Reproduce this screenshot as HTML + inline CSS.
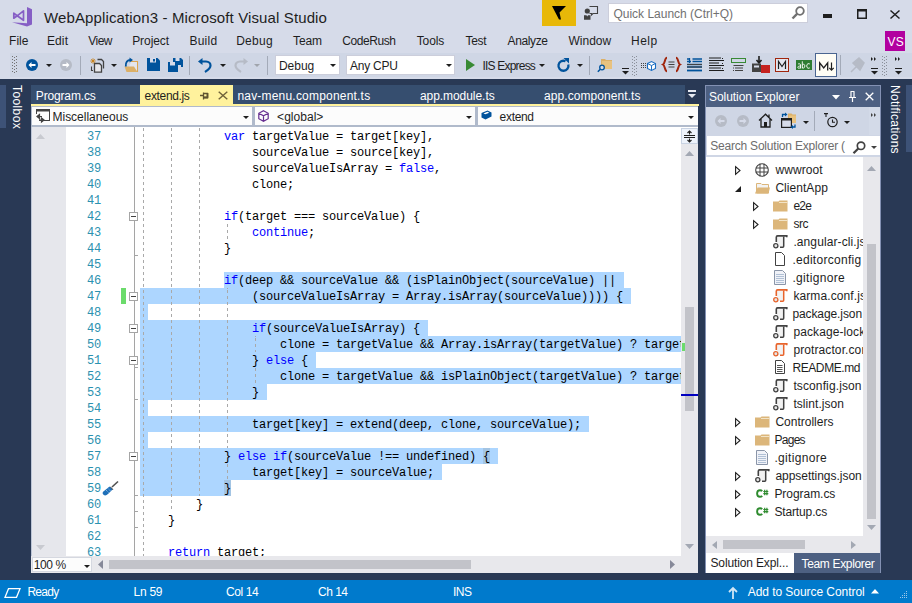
<!DOCTYPE html>
<html><head><meta charset="utf-8">
<style>
*{margin:0;padding:0;box-sizing:border-box}
html,body{width:912px;height:603px;overflow:hidden}
body{position:relative;background:#293955;font-family:"Liberation Sans",sans-serif;font-size:12px;color:#1E1E1E}
.a{position:absolute}
.t{position:absolute;white-space:pre;line-height:14px}
svg{position:absolute;overflow:visible}
#top{left:0;top:0;width:912px;height:79px;background:#D6DBE9}
#tb{left:10px;top:53px;width:902px;height:24px;background:#CFD6E5}
#status{left:0;top:580px;width:912px;height:23px;background:#007ACC}
#tabs{left:31px;top:85px;width:654px;height:19px;background:#364E6F}
#atab{left:140px;top:85px;width:93px;height:19px;background:#FFF29D}
#yline{left:31px;top:104px;width:668px;height:2px;background:#FFF29D}
#nav{left:31px;top:106px;width:667px;height:21px;background:#B0BACB}
.combo{position:absolute;top:107px;height:18px;background:#FCFCFC}
#editor{left:31px;top:127px;width:667px;height:446px;background:#fff;overflow:hidden}
#gut{left:32px;top:127px;width:34px;height:429px;background:#E6E7EC}
.code{position:absolute;font-family:"Liberation Mono",monospace;font-size:12px;letter-spacing:-0.2px;line-height:16px;white-space:pre}
.ln{left:34px;width:36px;text-align:right;color:#2B91AF}
.cl{left:140px;color:#000}
.k{color:#0000FF}
.sel{position:absolute;background:#ADD6FF}
#se{left:705px;top:85px;width:176px;height:488px;background:#fff;border:1px solid #8391B3}
#setitle{left:706px;top:86px;width:174px;height:21px;background:#4D6082}
#setb{left:706px;top:107px;width:174px;height:28px;background:#CFD6E5}
#sesearch{left:706px;top:135px;width:174px;height:22px;background:#CFD6E5}
</style></head><body>
<div id="top" class="a"></div>
<div id="tb" class="a"></div>
<div id="status" class="a"></div>
<div id="tabs" class="a"></div>
<div id="atab" class="a"></div>
<div id="yline" class="a"></div>
<div id="nav" class="a"></div>
<div class="combo" style="left:32px;width:220px"></div>
<div class="combo" style="left:255px;width:220px"></div>
<div class="combo" style="left:478px;width:220px"></div>
<svg style="left:12px;top:7px;" width="21" height="21" viewBox="0 0 21 21"><path d="M15 0L20 2.3V17.5L15 19.5Z" fill="#865FC5"/><path d="M0 15.2L15 16.3V19.5Z" fill="#865FC5"/><path d="M1.8 6.2L5.2 8.8L1.8 11.2Z M11.5 3.8V13.3L5.2 8.8Z" fill="none" stroke="#865FC5" stroke-width="1.7" stroke-linejoin="round"/></svg>
<div class="t" style="left:44.00px;top:10px;font-size:15px;line-height:1;color:#1E1E1E;;letter-spacing:0.125px">WebApplication3 - Microsoft Visual Studio</div>
<div class="a" style="left:542px;top:0px;width:34px;height:26px;background:#E8B808;"></div>
<svg style="left:551px;top:6px;" width="16" height="15" viewBox="0 0 16 15"><path d="M1 0H15L8.5 6.5L10 13.5H8Z" fill="#000"/></svg>
<svg style="left:583px;top:5px;" width="17" height="16" viewBox="0 0 17 16"><path d="M6.5 1.5H14.5V8.5H10L8.5 10V8.5H6.5" fill="none" stroke="#424242" stroke-width="1.1"/><circle cx="4.3" cy="6" r="2.6" fill="#424242"/><path d="M1 14.8V10.3H3.5L4.3 11.5L5 10.3H7.5V14.8Z" fill="#424242"/></svg>
<div class="a" style="left:608px;top:3px;width:200px;height:20px;background:#fff;border:1px solid #CCCEDB"></div>
<div class="t" style="left:613.40px;top:8px;font-size:12px;line-height:1;color:#717171;;letter-spacing:0.000px">Quick Launch (Ctrl+Q)</div>
<svg style="left:791px;top:6px;" width="14" height="14" viewBox="0 0 14 14"><circle cx="9" cy="5" r="3.8" fill="none" stroke="#717171" stroke-width="1.8"/><path d="M6.3 7.7 L1.5 12.5" stroke="#717171" stroke-width="2.4"/></svg>
<div class="a" style="left:823px;top:14px;width:9px;height:4px;background:#1E1E1E;"></div>
<svg style="left:857px;top:9px;" width="10" height="10" viewBox="0 0 10 10"><rect x="0.75" y="0.75" width="8.5" height="8.5" fill="none" stroke="#1E1E1E" stroke-width="1.5"/><rect x="0" y="0" width="10" height="2.5" fill="#1E1E1E"/></svg>
<svg style="left:890px;top:10px;" width="10" height="9" viewBox="0 0 10 9"><path d="M0.5 0.5 L9.5 8.5 M9.5 0.5 L0.5 8.5" stroke="#1E1E1E" stroke-width="1.5"/></svg>
<div class="t" style="left:9.10px;top:35px;font-size:12px;line-height:1;color:#1E1E1E;;letter-spacing:0.000px">File</div>
<div class="t" style="left:46.90px;top:35px;font-size:12px;line-height:1;color:#1E1E1E;;letter-spacing:0.133px">Edit</div>
<div class="t" style="left:88.30px;top:35px;font-size:12px;line-height:1;color:#1E1E1E;;letter-spacing:-0.533px">View</div>
<div class="t" style="left:132.20px;top:35px;font-size:12px;line-height:1;color:#1E1E1E;;letter-spacing:-0.067px">Project</div>
<div class="t" style="left:189.40px;top:35px;font-size:12px;line-height:1;color:#1E1E1E;;letter-spacing:0.250px">Build</div>
<div class="t" style="left:236.20px;top:35px;font-size:12px;line-height:1;color:#1E1E1E;;letter-spacing:0.250px">Debug</div>
<div class="t" style="left:293.10px;top:35px;font-size:12px;line-height:1;color:#1E1E1E;;letter-spacing:-0.133px">Team</div>
<div class="t" style="left:342.30px;top:35px;font-size:12px;line-height:1;color:#1E1E1E;;letter-spacing:-0.429px">CodeRush</div>
<div class="t" style="left:416.70px;top:35px;font-size:12px;line-height:1;color:#1E1E1E;;letter-spacing:-0.100px">Tools</div>
<div class="t" style="left:465.60px;top:35px;font-size:12px;line-height:1;color:#1E1E1E;;letter-spacing:-0.333px">Test</div>
<div class="t" style="left:507.50px;top:35px;font-size:12px;line-height:1;color:#1E1E1E;;letter-spacing:-0.367px">Analyze</div>
<div class="t" style="left:568.50px;top:35px;font-size:12px;line-height:1;color:#1E1E1E;;letter-spacing:0.000px">Window</div>
<div class="t" style="left:631.10px;top:35px;font-size:12px;line-height:1;color:#1E1E1E;;letter-spacing:0.467px">Help</div>
<div class="a" style="left:885px;top:31px;width:20px;height:20px;background:#B2009F;"></div>
<div class="t" style="left:887.5px;top:36px;font-size:12px;line-height:1;color:#fff;letter-spacing:0.3px">VS</div>
<div class="a" style="left:12px;top:56px;width:1px;height:1px;background:#717171;"></div>
<div class="a" style="left:16px;top:56px;width:1px;height:1px;background:#717171;"></div>
<div class="a" style="left:14px;top:57px;width:1px;height:1px;background:#717171;"></div>
<div class="a" style="left:12px;top:59px;width:1px;height:1px;background:#717171;"></div>
<div class="a" style="left:16px;top:59px;width:1px;height:1px;background:#717171;"></div>
<div class="a" style="left:14px;top:60px;width:1px;height:1px;background:#717171;"></div>
<div class="a" style="left:12px;top:62px;width:1px;height:1px;background:#717171;"></div>
<div class="a" style="left:16px;top:62px;width:1px;height:1px;background:#717171;"></div>
<div class="a" style="left:14px;top:63px;width:1px;height:1px;background:#717171;"></div>
<div class="a" style="left:12px;top:65px;width:1px;height:1px;background:#717171;"></div>
<div class="a" style="left:16px;top:65px;width:1px;height:1px;background:#717171;"></div>
<div class="a" style="left:14px;top:66px;width:1px;height:1px;background:#717171;"></div>
<div class="a" style="left:12px;top:68px;width:1px;height:1px;background:#717171;"></div>
<div class="a" style="left:16px;top:68px;width:1px;height:1px;background:#717171;"></div>
<div class="a" style="left:14px;top:69px;width:1px;height:1px;background:#717171;"></div>
<div class="a" style="left:12px;top:71px;width:1px;height:1px;background:#717171;"></div>
<div class="a" style="left:16px;top:71px;width:1px;height:1px;background:#717171;"></div>
<div class="a" style="left:14px;top:72px;width:1px;height:1px;background:#717171;"></div>
<svg style="left:26px;top:59px;" width="12" height="12" viewBox="0 0 12 12"><circle cx="6" cy="6" r="6" fill="#00539C"/><path d="M2.5 6 L5.5 3 V5 H9.5 V7 H5.5 V9Z" fill="#fff"/></svg>
<svg style="left:46px;top:64px;" width="6" height="4" viewBox="0 0 6 4"><path d="M0 0h6l-3 3z" fill="#1E1E1E"/></svg>
<svg style="left:60px;top:59px;" width="12" height="12" viewBox="0 0 12 12"><circle cx="6" cy="6" r="6" fill="#B6BBC6"/><path d="M9.5 6 L6.5 3 V5 H2.5 V7 H6.5 V9Z" fill="#fff"/></svg>
<div class="a" style="left:80px;top:56px;width:1px;height:19px;background:#A3AAB8;"></div>
<svg style="left:90px;top:58px;" width="14" height="15" viewBox="0 0 14 15"><path d="M7.5 1.5H11.5L13.5 3.5V10.5" fill="none" stroke="#424242" stroke-width="1.3"/><path d="M4.5 5.5H9.5L11.5 7.5V14.2H4.5Z" fill="#E8E8EC" stroke="#424242" stroke-width="1.3"/><path d="M1.5 8.5V12.5H3" fill="none" stroke="#424242" stroke-width="1.1"/><path d="M3 0.3V5.7M0.3 3H5.7M1.2 1.2L4.8 4.8M4.8 1.2L1.2 4.8" stroke="#C8811A" stroke-width="0.9"/></svg>
<svg style="left:111px;top:64px;" width="6" height="4" viewBox="0 0 6 4"><path d="M0 0h6l-3 3z" fill="#1E1E1E"/></svg>
<svg style="left:124px;top:58px;" width="15" height="15" viewBox="0 0 15 15"><path d="M7 3.5H13.5V14" fill="none" stroke="#DCA54F" stroke-width="1.1"/><path d="M7 4H13V14H3Z" fill="#E4E6EE"/><path d="M0.5 8.5H10L13.5 14H2.5Z" fill="#DCB067"/><path d="M1.8 8.5C1.3 4 3.5 2 6.5 2" fill="none" stroke="#00539C" stroke-width="1.8"/><path d="M5.5 -0.5L9 2L5.5 4.5Z" fill="#00539C"/></svg>
<svg style="left:147px;top:58px;" width="13" height="13" viewBox="0 0 13 13"><path d="M0 0H10.5L13 2.5V13H0Z" fill="#00539C"/><rect x="3" y="0" width="6" height="4.5" fill="#D6DBE9"/><rect x="6" y="1" width="2" height="2.5" fill="#00539C"/><rect x="2.5" y="8" width="8" height="5" fill="#00539C"/></svg>
<svg style="left:168px;top:58px;" width="15" height="14" viewBox="0 0 15 14"><path d="M5 0H13L15 2V9H13V7H5Z" fill="#00539C"/><rect x="7.5" y="0" width="4" height="3" fill="#D6DBE9"/><path d="M0 4H8L10 6V14H0Z" fill="#00539C"/><rect x="2" y="4" width="5" height="3.5" fill="#D6DBE9"/><rect x="2" y="10" width="6" height="4" fill="#00539C"/></svg>
<div class="a" style="left:189px;top:56px;width:1px;height:19px;background:#A3AAB8;"></div>
<svg style="left:198px;top:58px;" width="14" height="15" viewBox="0 0 14 15"><path d="M3 3.5 H8 C11 3.5 12.5 5.5 12.5 7.5 C12.5 10.5 10 12 7 14" fill="none" stroke="#00539C" stroke-width="2.2"/><path d="M0 3.5 L4.5 0 V7Z" fill="#00539C"/></svg>
<svg style="left:220px;top:64px;" width="6" height="4" viewBox="0 0 6 4"><path d="M0 0h6l-3 3z" fill="#1E1E1E"/></svg>
<svg style="left:234px;top:58px;" width="14" height="15" viewBox="0 0 14 15"><path d="M11 3.5 H6 C3 3.5 1.5 5.5 1.5 7.5 C1.5 10.5 4 12 7 14" fill="none" stroke="#B6BBC6" stroke-width="2.2"/><path d="M14 3.5 L9.5 0 V7Z" fill="#B6BBC6"/></svg>
<svg style="left:254px;top:64px;" width="6" height="4" viewBox="0 0 6 4"><path d="M0 0h6l-3 3z" fill="#A0A4AC"/></svg>
<div class="a" style="left:267px;top:56px;width:1px;height:19px;background:#A3AAB8;"></div>
<div class="a" style="left:275px;top:55px;width:65px;height:20px;background:#fff;border:1px solid #CCCEDB"></div>
<div class="t" style="left:278.90px;top:60px;font-size:12px;line-height:1;color:#1E1E1E;;letter-spacing:0.000px">Debug</div>
<svg style="left:330px;top:64px;" width="6" height="4" viewBox="0 0 6 4"><path d="M0 0h6l-3 3z" fill="#1E1E1E"/></svg>
<div class="a" style="left:346px;top:55px;width:109px;height:20px;background:#fff;border:1px solid #CCCEDB"></div>
<div class="t" style="left:350.00px;top:60px;font-size:12px;line-height:1;color:#1E1E1E;;letter-spacing:-0.233px">Any CPU</div>
<svg style="left:446px;top:64px;" width="6" height="4" viewBox="0 0 6 4"><path d="M0 0h6l-3 3z" fill="#1E1E1E"/></svg>
<svg style="left:466px;top:59px;" width="9" height="12" viewBox="0 0 9 12"><path d="M0 0 L9 6 L0 12Z" fill="#388A34"/></svg>
<div class="t" style="left:482.50px;top:60px;font-size:12px;line-height:1;color:#1E1E1E;;letter-spacing:-0.800px">IIS Express</div>
<svg style="left:539px;top:64px;" width="6" height="4" viewBox="0 0 6 4"><path d="M0 0h6l-3 3z" fill="#1E1E1E"/></svg>
<svg style="left:557px;top:58px;" width="13" height="14" viewBox="0 0 13 14"><path d="M8.5 3.2 A5 5 0 1 0 11.3 6.5" fill="none" stroke="#00539C" stroke-width="2.3"/><path d="M6.5 0 H12 V5.5Z" fill="#00539C"/></svg>
<svg style="left:577px;top:64px;" width="6" height="4" viewBox="0 0 6 4"><path d="M0 0h6l-3 3z" fill="#1E1E1E"/></svg>
<div class="a" style="left:589px;top:56px;width:1px;height:19px;background:#A3AAB8;"></div>
<svg style="left:597px;top:57px;" width="16" height="16" viewBox="0 0 16 16"><path d="M4 2H8L9 3H15V12H4Z" fill="#DCB067"/><path d="M5 4H15V12H5Z" fill="#E8C27F"/><circle cx="5" cy="10.5" r="2.3" fill="#D6DBE9" stroke="#00539C" stroke-width="1.3"/><path d="M3.3 12.3 L0.8 14.8" stroke="#00539C" stroke-width="1.6"/></svg>
<div class="a" style="left:622px;top:68px;width:7px;height:1px;background:#1E1E1E;"></div>
<svg style="left:622px;top:71px;" width="7" height="4" viewBox="0 0 7 4"><path d="M0 0h7l-3.5 3.5z" fill="#1E1E1E"/></svg>
<div class="a" style="left:632px;top:56px;width:1px;height:1px;background:#8A8F99;"></div>
<div class="a" style="left:636px;top:56px;width:1px;height:1px;background:#8A8F99;"></div>
<div class="a" style="left:634px;top:57px;width:1px;height:1px;background:#8A8F99;"></div>
<div class="a" style="left:632px;top:59px;width:1px;height:1px;background:#8A8F99;"></div>
<div class="a" style="left:636px;top:59px;width:1px;height:1px;background:#8A8F99;"></div>
<div class="a" style="left:634px;top:60px;width:1px;height:1px;background:#8A8F99;"></div>
<div class="a" style="left:632px;top:62px;width:1px;height:1px;background:#8A8F99;"></div>
<div class="a" style="left:636px;top:62px;width:1px;height:1px;background:#8A8F99;"></div>
<div class="a" style="left:634px;top:63px;width:1px;height:1px;background:#8A8F99;"></div>
<div class="a" style="left:632px;top:65px;width:1px;height:1px;background:#8A8F99;"></div>
<div class="a" style="left:636px;top:65px;width:1px;height:1px;background:#8A8F99;"></div>
<div class="a" style="left:634px;top:66px;width:1px;height:1px;background:#8A8F99;"></div>
<div class="a" style="left:632px;top:68px;width:1px;height:1px;background:#8A8F99;"></div>
<div class="a" style="left:636px;top:68px;width:1px;height:1px;background:#8A8F99;"></div>
<div class="a" style="left:634px;top:69px;width:1px;height:1px;background:#8A8F99;"></div>
<div class="a" style="left:632px;top:71px;width:1px;height:1px;background:#8A8F99;"></div>
<div class="a" style="left:636px;top:71px;width:1px;height:1px;background:#8A8F99;"></div>
<div class="a" style="left:634px;top:72px;width:1px;height:1px;background:#8A8F99;"></div>
<div class="a" style="left:632px;top:74px;width:1px;height:1px;background:#8A8F99;"></div>
<div class="a" style="left:636px;top:74px;width:1px;height:1px;background:#8A8F99;"></div>
<div class="a" style="left:634px;top:75px;width:1px;height:1px;background:#8A8F99;"></div>
<svg style="left:641px;top:61px;" width="16" height="10" viewBox="0 0 16 10"><g fill="#424242"><rect x="0" y="2" width="1" height="1"/><rect x="2" y="2" width="1" height="1"/><rect x="4" y="2" width="1" height="1"/><rect x="0" y="4" width="1" height="1"/><rect x="2" y="4" width="1" height="1"/><rect x="4" y="4" width="1" height="1"/><rect x="0" y="6" width="1" height="1"/><rect x="2" y="6" width="1" height="1"/><rect x="4" y="6" width="1" height="1"/></g><path d="M6.5 2.5 L10.5 0.5 L14.5 2.5 V7.5 L10.5 9.5 L6.5 7.5Z" fill="#fff" stroke="#1B6EC2" stroke-width="1.1"/><path d="M6.5 2.5 L10.5 4.5 L14.5 2.5 M10.5 4.5 V9.5" fill="none" stroke="#1B6EC2" stroke-width="1"/></svg>
<svg style="left:662px;top:57px;" width="19" height="15" viewBox="0 0 19 15"><path d="M5 0.8 C2.5 0.8 3.3 6.2 1 7.5 C3.3 8.8 2.5 14.2 5 14.2 M14 0.8 C16.5 0.8 15.7 6.2 18 7.5 C15.7 8.8 16.5 14.2 14 14.2" fill="none" stroke="#A1260D" stroke-width="2"/><path d="M6.5 5h6M6.5 7.5h6M6.5 10h6" stroke="#424242" stroke-width="1.2"/></svg>
<svg style="left:687px;top:58px;" width="15" height="14" viewBox="0 0 15 14"><path d="M0 1h2M0 3.5h4M2.5 0v5M5.5 1h9.5M5.5 3.5h9.5M0 6.5h15M0 9h15M0 12.5h15" stroke="#00539C" stroke-width="1.3"/><path d="M0 6.5h15M0 9h15" stroke="#424242" stroke-width="1.2"/><path d="M0 12.5h15" stroke="#00539C" stroke-width="1.4"/></svg>
<svg style="left:709px;top:57px;" width="15" height="15" viewBox="0 0 15 15"><path d="M0 1h12M0 3.5h15M0 6h10M0 8.5h15M0 11h12M0 13.5h15" stroke="#1E1E1E" stroke-width="1.2"/><path d="M13.5 1v1M13.5 6v1M13.5 11v1" stroke="#1E1E1E"/></svg>
<svg style="left:731px;top:58px;" width="15" height="14" viewBox="0 0 15 14"><rect x="0.5" y="0.5" width="14" height="4" fill="none" stroke="#388A34"/><path d="M2.5 7.5h10M4 10h8M4 12.5h8" stroke="#424242" stroke-width="1.1"/><path d="M2 10h1M2 12.5h1" stroke="#424242"/></svg>
<svg style="left:752px;top:56px;" width="19" height="17" viewBox="0 0 19 17"><path d="M7 0v6M4.5 4L7 7L9.5 4" fill="none" stroke="#1E1E1E" stroke-width="1.6"/><path d="M0 7.5H9V16H0Z" fill="#424242"/><rect x="2" y="9.5" width="5" height="2" fill="#D6DBE9"/><rect x="9" y="9" width="9" height="8" fill="#C5221F"/></svg>
<svg style="left:775px;top:58px;" width="14" height="14" viewBox="0 0 14 14"><rect x="0.5" y="0.5" width="13" height="13" fill="#E4E7F0" stroke="#A1260D" stroke-width="1"/><path d="M3.5 11V3.5L7 8.5L10.5 3.5V11" fill="none" stroke="#1E1E1E" stroke-width="1.2"/></svg>
<div class="a" style="left:796px;top:60px;width:16px;height:10px;background:#2E7D32;"></div>
<svg style="left:797px;top:61px;" width="14" height="8" viewBox="0 0 14 8"><path d="M1 3.2C1.5 2.5 3.5 2.5 3.5 3.8V7.5M3.5 5C1.5 5 0.8 5.6 0.8 6.4C0.8 7.6 2.8 7.5 3.5 6.3M5.3 0.3V7.5M5.3 4.5C5.3 3 7.8 2.6 7.8 5C7.8 7.6 5.3 7.6 5.3 5.8M12.8 3C12 2.3 9.7 2.4 9.7 5C9.7 7.5 12 7.7 12.8 6.8" fill="none" stroke="#fff" stroke-width="0.9"/></svg>
<div class="a" style="left:815px;top:53px;width:22px;height:24px;background:#FFFDF5;border:1px solid #4A6591"></div>
<svg style="left:819px;top:62px;" width="15" height="9" viewBox="0 0 15 9"><path d="M0.7 8.5V0.8L4.7 6L8.7 0.8V8.5" fill="none" stroke="#1E1E1E" stroke-width="1.3"/><path d="M12.5 0.5V8M10.3 5.8L12.5 8.2L14.7 5.8" fill="none" stroke="#1E1E1E" stroke-width="1.2"/></svg>
<div class="a" style="left:840px;top:55px;width:1px;height:20px;background:#A3AAB8;"></div>
<svg style="left:850px;top:58px;" width="15" height="15" viewBox="0 0 15 15"><path d="M1 14 L7 8 M6 3 L12 9 M9 0 L14 5 L10 12 L3 5Z" fill="#B6BBC6" stroke="#B6BBC6" stroke-width="1.5"/></svg>
<svg style="left:871px;top:57px;" width="6" height="5" viewBox="0 0 6 5"><path d="M0 0L2 2L0 4ZM3 0L5 2L3 4Z" fill="#1E1E1E"/></svg>
<div class="a" style="left:871px;top:68px;width:7px;height:1px;background:#1E1E1E;"></div>
<svg style="left:871px;top:71px;" width="7" height="4" viewBox="0 0 7 4"><path d="M0 0h7l-3.5 3.5z" fill="#1E1E1E"/></svg>
<svg style="left:895px;top:57px;" width="6" height="5" viewBox="0 0 6 5"><path d="M0 0L2 2L0 4ZM3 0L5 2L3 4Z" fill="#1E1E1E"/></svg>
<div class="a" style="left:895px;top:68px;width:7px;height:1px;background:#1E1E1E;"></div>
<svg style="left:895px;top:71px;" width="7" height="4" viewBox="0 0 7 4"><path d="M0 0h7l-3.5 3.5z" fill="#1E1E1E"/></svg>
<div class="a" style="left:882px;top:56px;width:1px;height:1px;background:#8A8F99;"></div>
<div class="a" style="left:886px;top:56px;width:1px;height:1px;background:#8A8F99;"></div>
<div class="a" style="left:884px;top:57px;width:1px;height:1px;background:#8A8F99;"></div>
<div class="a" style="left:882px;top:59px;width:1px;height:1px;background:#8A8F99;"></div>
<div class="a" style="left:886px;top:59px;width:1px;height:1px;background:#8A8F99;"></div>
<div class="a" style="left:884px;top:60px;width:1px;height:1px;background:#8A8F99;"></div>
<div class="a" style="left:882px;top:62px;width:1px;height:1px;background:#8A8F99;"></div>
<div class="a" style="left:886px;top:62px;width:1px;height:1px;background:#8A8F99;"></div>
<div class="a" style="left:884px;top:63px;width:1px;height:1px;background:#8A8F99;"></div>
<div class="a" style="left:882px;top:65px;width:1px;height:1px;background:#8A8F99;"></div>
<div class="a" style="left:886px;top:65px;width:1px;height:1px;background:#8A8F99;"></div>
<div class="a" style="left:884px;top:66px;width:1px;height:1px;background:#8A8F99;"></div>
<div class="a" style="left:882px;top:68px;width:1px;height:1px;background:#8A8F99;"></div>
<div class="a" style="left:886px;top:68px;width:1px;height:1px;background:#8A8F99;"></div>
<div class="a" style="left:884px;top:69px;width:1px;height:1px;background:#8A8F99;"></div>
<div class="a" style="left:882px;top:71px;width:1px;height:1px;background:#8A8F99;"></div>
<div class="a" style="left:886px;top:71px;width:1px;height:1px;background:#8A8F99;"></div>
<div class="a" style="left:884px;top:72px;width:1px;height:1px;background:#8A8F99;"></div>
<div class="a" style="left:882px;top:74px;width:1px;height:1px;background:#8A8F99;"></div>
<div class="a" style="left:886px;top:74px;width:1px;height:1px;background:#8A8F99;"></div>
<div class="a" style="left:884px;top:75px;width:1px;height:1px;background:#8A8F99;"></div>
<div class="t" style="left:35.80px;top:90px;font-size:12px;line-height:1;color:#FFFFFF;;letter-spacing:-0.156px">Program.cs</div>
<div class="t" style="left:144.60px;top:90px;font-size:12px;line-height:1;color:#1E1E1E;;letter-spacing:-0.350px">extend.js</div>
<svg style="left:200px;top:92px;" width="9" height="8" viewBox="0 0 9 8"><path d="M0 3.5H3.5M3.5 0.5V7.5M3.5 1.5H8M3.5 5.5H8M7.5 1.5V5.5" fill="none" stroke="#5F5330" stroke-width="1.3"/><path d="M7.5 1V6.3M3.5 5.5H8" stroke="#5F5330" stroke-width="1.8"/></svg>
<svg style="left:218px;top:91px;" width="10" height="9" viewBox="0 0 10 9"><path d="M0.7 0.7L9.3 8.3M9.3 0.7L0.7 8.3" stroke="#6F623A" stroke-width="1.4"/></svg>
<div class="t" style="left:237.40px;top:90px;font-size:12px;line-height:1;color:#FFFFFF;;letter-spacing:0.200px">nav-menu.component.ts</div>
<div class="t" style="left:419.90px;top:90px;font-size:12px;line-height:1;color:#FFFFFF;;letter-spacing:-0.050px">app.module.ts</div>
<div class="t" style="left:544.10px;top:90px;font-size:12px;line-height:1;color:#FFFFFF;;letter-spacing:0.067px">app.component.ts</div>
<div class="a" style="left:688px;top:90px;width:8px;height:2px;background:#E6E9F0;"></div>
<svg style="left:688px;top:94px;" width="8" height="5" viewBox="0 0 8 5"><path d="M0 0h8l-4 4z" fill="#E6E9F0"/></svg>
<svg style="left:36px;top:109px;" width="15" height="15" viewBox="0 0 15 15"><rect x="0.5" y="0.5" width="13" height="11" fill="none" stroke="#424242"/><rect x="0" y="0" width="14" height="2.5" fill="#424242"/><rect x="0" y="5" width="3" height="9" fill="#FCFCFC"/><path d="M1 7.5 L3.5 5.5 V9.5Z M1.5 7.5 H6 M8 11 L5.5 9 V13Z M7.5 11 H3" fill="#424242" stroke="#424242" stroke-width="1.2"/></svg>
<div class="t" style="left:52.50px;top:111px;font-size:12px;line-height:1;color:#1E1E1E;;letter-spacing:-0.017px">Miscellaneous</div>
<svg style="left:243px;top:116px;" width="6" height="4" viewBox="0 0 6 4"><path d="M0 0h6l-3 3z" fill="#1E1E1E"/></svg>
<svg style="left:258px;top:110px;" width="11" height="12" viewBox="0 0 11 12"><path d="M5.5 0.8 L10.2 3.3 V8.7 L5.5 11.2 L0.8 8.7 V3.3Z M0.8 3.3 L5.5 5.8 L10.2 3.3 M5.5 5.8 V11.2" fill="none" stroke="#652D90" stroke-width="1.2"/></svg>
<div class="t" style="left:277.10px;top:111px;font-size:12px;line-height:1;color:#1E1E1E;;letter-spacing:0.029px">&lt;global&gt;</div>
<svg style="left:466px;top:116px;" width="6" height="4" viewBox="0 0 6 4"><path d="M0 0h6l-3 3z" fill="#1E1E1E"/></svg>
<svg style="left:481px;top:110px;" width="11" height="10" viewBox="0 0 11 10"><path d="M0.5 3 L6.5 0.5 L10.5 2.5 V6.5 L4.5 9.5 L0.5 7.5Z" fill="#00539C"/><path d="M2.5 3.5 L6.5 1.8 L8.3 2.7 L4.3 4.3Z" fill="#fff"/></svg>
<div class="t" style="left:499.60px;top:111px;font-size:12px;line-height:1;color:#1E1E1E;;letter-spacing:-0.320px">extend</div>
<svg style="left:688px;top:116px;" width="6" height="4" viewBox="0 0 6 4"><path d="M0 0h6l-3 3z" fill="#1E1E1E"/></svg>
<div class="a" style="left:0px;top:85px;width:6px;height:43px;background:#3D5277;"></div>
<div class="t" style="left:12px;top:-109px;font-size:12px;line-height:1;color:#FFFFFF;transform-origin:0 0;transform:rotate(90deg);left:23px;top:85px;letter-spacing:0.4px">Toolbox</div>
<div class="a" style="left:906px;top:85px;width:6px;height:67px;background:#3D5277;"></div>
<div class="t" style="left:0px;top:-9px;font-size:12px;line-height:1;color:#FFFFFF;transform-origin:0 0;transform:rotate(90deg);left:901px;top:85px;letter-spacing:0.27px">Notifications</div>
<div id="editor" class="a">
<div class="sel" style="left:193px;top:145px;width:400px;height:16px"></div>
<div class="sel" style="left:109px;top:161px;width:491px;height:16px"></div>
<div class="sel" style="left:109px;top:177px;width:8px;height:16px"></div>
<div class="sel" style="left:109px;top:193px;width:288px;height:16px"></div>
<div class="sel" style="left:109px;top:209px;width:631px;height:16px"></div>
<div class="sel" style="left:109px;top:225px;width:176px;height:16px"></div>
<div class="sel" style="left:109px;top:241px;width:631px;height:16px"></div>
<div class="sel" style="left:109px;top:257px;width:127px;height:16px"></div>
<div class="sel" style="left:109px;top:273px;width:8px;height:16px"></div>
<div class="sel" style="left:109px;top:289px;width:449px;height:16px"></div>
<div class="sel" style="left:109px;top:305px;width:8px;height:16px"></div>
<div class="sel" style="left:109px;top:321px;width:358px;height:16px"></div>
<div class="sel" style="left:109px;top:337px;width:302px;height:16px"></div>
<div class="sel" style="left:109px;top:353px;width:91px;height:16px"></div>
<div class="sel" style="left:452px;top:321px;width:7px;height:16px;background:#A3C4E3"></div>
<div class="sel" style="left:193px;top:353px;width:7px;height:16px;background:#A3C4E3"></div>
<div class="a" style="left:112px;top:1px;width:1px;height:428px;background:repeating-linear-gradient(to bottom,#A9A9A9 0,#A9A9A9 3px,transparent 3px,transparent 6px);background-position:0 0px"></div>
<div class="a" style="left:140px;top:1px;width:1px;height:384px;background:repeating-linear-gradient(to bottom,#A9A9A9 0,#A9A9A9 3px,transparent 3px,transparent 6px);background-position:0 0px"></div>
<div class="a" style="left:168px;top:1px;width:1px;height:368px;background:repeating-linear-gradient(to bottom,#A9A9A9 0,#A9A9A9 3px,transparent 3px,transparent 6px);background-position:0 0px"></div>
<div class="a" style="left:196px;top:97px;width:1px;height:16px;background:repeating-linear-gradient(to bottom,#A9A9A9 0,#A9A9A9 3px,transparent 3px,transparent 6px);background-position:0 0px"></div>
<div class="a" style="left:196px;top:161px;width:1px;height:160px;background:repeating-linear-gradient(to bottom,#A9A9A9 0,#A9A9A9 3px,transparent 3px,transparent 6px);background-position:0 2px"></div>
<div class="a" style="left:196px;top:337px;width:1px;height:16px;background:repeating-linear-gradient(to bottom,#A9A9A9 0,#A9A9A9 3px,transparent 3px,transparent 6px);background-position:0 0px"></div>
<div class="a" style="left:224px;top:209px;width:1px;height:16px;background:repeating-linear-gradient(to bottom,#A9A9A9 0,#A9A9A9 3px,transparent 3px,transparent 6px);background-position:0 2px"></div>
<div class="a" style="left:224px;top:241px;width:1px;height:16px;background:repeating-linear-gradient(to bottom,#A9A9A9 0,#A9A9A9 3px,transparent 3px,transparent 6px);background-position:0 0px"></div>
<div class="code ln" style="top:2px">37</div>
<div class="code cl" style="left:109px;top:2px">            <span class="k">var</span> targetValue = target[key],</div>
<div class="code ln" style="top:18px">38</div>
<div class="code cl" style="left:109px;top:18px">                sourceValue = source[key],</div>
<div class="code ln" style="top:34px">39</div>
<div class="code cl" style="left:109px;top:34px">                sourceValueIsArray = <span class="k">false</span>,</div>
<div class="code ln" style="top:50px">40</div>
<div class="code cl" style="left:109px;top:50px">                clone;</div>
<div class="code ln" style="top:66px">41</div>
<div class="code ln" style="top:82px">42</div>
<div class="code cl" style="left:109px;top:82px">            <span class="k">if</span>(target === sourceValue) {</div>
<div class="code ln" style="top:98px">43</div>
<div class="code cl" style="left:109px;top:98px">                <span class="k">continue</span>;</div>
<div class="code ln" style="top:114px">44</div>
<div class="code cl" style="left:109px;top:114px">            }</div>
<div class="code ln" style="top:130px">45</div>
<div class="code ln" style="top:146px">46</div>
<div class="code cl" style="left:109px;top:146px">            <span class="k">if</span>(deep &amp;&amp; sourceValue &amp;&amp; (isPlainObject(sourceValue) ||</div>
<div class="code ln" style="top:162px">47</div>
<div class="code cl" style="left:109px;top:162px">                (sourceValueIsArray = Array.isArray(sourceValue)))) {</div>
<div class="code ln" style="top:178px">48</div>
<div class="code ln" style="top:194px">49</div>
<div class="code cl" style="left:109px;top:194px">                <span class="k">if</span>(sourceValueIsArray) {</div>
<div class="code ln" style="top:210px">50</div>
<div class="code cl" style="left:109px;top:210px">                    clone = targetValue &amp;&amp; Array.isArray(targetValue) ? targetValue : [];</div>
<div class="code ln" style="top:226px">51</div>
<div class="code cl" style="left:109px;top:226px">                } <span class="k">else</span> {</div>
<div class="code ln" style="top:242px">52</div>
<div class="code cl" style="left:109px;top:242px">                    clone = targetValue &amp;&amp; isPlainObject(targetValue) ? targetValue : {};</div>
<div class="code ln" style="top:258px">53</div>
<div class="code cl" style="left:109px;top:258px">                }</div>
<div class="code ln" style="top:274px">54</div>
<div class="code ln" style="top:290px">55</div>
<div class="code cl" style="left:109px;top:290px">                target[key] = extend(deep, clone, sourceValue);</div>
<div class="code ln" style="top:306px">56</div>
<div class="code ln" style="top:322px">57</div>
<div class="code cl" style="left:109px;top:322px">            } <span class="k">else</span> <span class="k">if</span>(sourceValue !== undefined) {</div>
<div class="code ln" style="top:338px">58</div>
<div class="code cl" style="left:109px;top:338px">                target[key] = sourceValue;</div>
<div class="code ln" style="top:354px">59</div>
<div class="code cl" style="left:109px;top:354px">            }</div>
<div class="code ln" style="top:370px">60</div>
<div class="code cl" style="left:109px;top:370px">        }</div>
<div class="code ln" style="top:386px">61</div>
<div class="code cl" style="left:109px;top:386px">    }</div>
<div class="code ln" style="top:402px">62</div>
<div class="code ln" style="top:418px">63</div>
<div class="code cl" style="left:109px;top:418px">    <span class="k">return</span> target;</div>
<div class="a" style="left:103px;top:0;width:1px;height:429px;background:#A5A5A5"></div>
<div class="a" style="left:98px;top:85px;width:9px;height:9px;background:#fff;border:1px solid #A5A5A5"></div>
<div class="a" style="left:100px;top:89px;width:5px;height:1px;background:#424242"></div>
<div class="a" style="left:98px;top:165px;width:9px;height:9px;background:#fff;border:1px solid #A5A5A5"></div>
<div class="a" style="left:100px;top:169px;width:5px;height:1px;background:#424242"></div>
<div class="a" style="left:98px;top:197px;width:9px;height:9px;background:#fff;border:1px solid #A5A5A5"></div>
<div class="a" style="left:100px;top:201px;width:5px;height:1px;background:#424242"></div>
<div class="a" style="left:98px;top:229px;width:9px;height:9px;background:#fff;border:1px solid #A5A5A5"></div>
<div class="a" style="left:100px;top:233px;width:5px;height:1px;background:#424242"></div>
<div class="a" style="left:98px;top:325px;width:9px;height:9px;background:#fff;border:1px solid #A5A5A5"></div>
<div class="a" style="left:100px;top:329px;width:5px;height:1px;background:#424242"></div>
<div class="a" style="left:103px;top:128px;width:4px;height:1px;background:#A5A5A5"></div>
<div class="a" style="left:103px;top:272px;width:4px;height:1px;background:#A5A5A5"></div>
<div class="a" style="left:103px;top:368px;width:4px;height:1px;background:#A5A5A5"></div>
<div class="a" style="left:103px;top:384px;width:4px;height:1px;background:#A5A5A5"></div>
<div class="a" style="left:103px;top:400px;width:4px;height:1px;background:#A5A5A5"></div>
<div class="a" style="left:103px;top:240px;width:4px;height:1px;background:#A5A5A5"></div>
<div class="a" style="left:90px;top:161px;width:5px;height:16px;background:#6BDB6B"></div>
</div>
<div id="gut" class="a"></div>
<div id="se" class="a"></div>
<div id="setitle" class="a"></div>
<div id="setb" class="a"></div>
<div id="sesearch" class="a"></div>
<div class="t" style="left:709.00px;top:91px;font-size:12px;line-height:1;color:#FFFFFF;;letter-spacing:-0.062px">Solution Explorer</div>
<svg style="left:832px;top:95px;" width="8" height="5" viewBox="0 0 8 5"><path d="M0 0h8l-4 4.5z" fill="#FFFFFF"/></svg>
<svg style="left:849px;top:91px;" width="7" height="11" viewBox="0 0 7 11"><path d="M1.5 0.5H5.5M2 0.5V6M5 0.5V6M0 6.5H7M3.5 6.5V11" fill="none" stroke="#FFFFFF" stroke-width="1.2"/></svg>
<svg style="left:865px;top:92px;" width="9" height="9" viewBox="0 0 9 9"><path d="M0.7 0.7L8.3 8.3M8.3 0.7L0.7 8.3" stroke="#FFFFFF" stroke-width="1.3"/></svg>
<svg style="left:715px;top:115px;" width="12" height="12" viewBox="0 0 12 12"><circle cx="6" cy="6" r="6" fill="#B6BBC6"/><path d="M2.5 6 L5.5 3 V5 H9.5 V7 H5.5 V9Z" fill="#D6DBE9"/></svg>
<svg style="left:737px;top:115px;" width="12" height="12" viewBox="0 0 12 12"><circle cx="6" cy="6" r="6" fill="#B6BBC6"/><path d="M9.5 6 L6.5 3 V5 H2.5 V7 H6.5 V9Z" fill="#D6DBE9"/></svg>
<svg style="left:758px;top:113px;" width="15" height="15" viewBox="0 0 15 15"><path d="M1 7.5 L7.5 1.2 L14 7.5 M3 6 V14 H12 V6 M11 1.5 V4.5" fill="none" stroke="#1E1E1E" stroke-width="1.3"/><rect x="6" y="9" width="3" height="5" fill="#1E1E1E"/></svg>
<svg style="left:781px;top:112px;" width="16" height="17" viewBox="0 0 16 17"><path d="M7 1.5H10.5L11.5 2.5H15V11H7Z" fill="#DCB067"/><path d="M8 3.5H15V11H8Z" fill="#E8C27F"/><rect x="0.6" y="6.6" width="9.8" height="8.8" fill="#D6DBE9" stroke="#1E1E1E" stroke-width="1.2"/><rect x="0" y="6" width="11" height="2.5" fill="#1E1E1E"/><path d="M1.5 5V2.5H4.5" fill="none" stroke="#00539C" stroke-width="1.3"/><path d="M4 0.5L6.5 2.5L4 4.5Z" fill="#00539C"/><path d="M14 12.5V15H11.5" fill="none" stroke="#00539C" stroke-width="1.3"/><path d="M12 13L9.5 15L12 17Z" fill="#00539C"/></svg>
<svg style="left:803px;top:121px;" width="6" height="4" viewBox="0 0 6 4"><path d="M0 0h6l-3 3z" fill="#1E1E1E"/></svg>
<div class="a" style="left:814px;top:111px;width:1px;height:20px;background:#A3AAB8;"></div>
<svg style="left:824px;top:113px;" width="15" height="15" viewBox="0 0 15 15"><circle cx="8.5" cy="9" r="4.7" fill="none" stroke="#1E1E1E" stroke-width="1.2"/><path d="M8.5 6.5V9.2H11" fill="none" stroke="#1E1E1E" stroke-width="1.1"/><path d="M0 0.6H4M2 0.6V4" stroke="#1E1E1E" stroke-width="1.1"/></svg>
<svg style="left:844px;top:121px;" width="6" height="4" viewBox="0 0 6 4"><path d="M0 0h6l-3 3z" fill="#1E1E1E"/></svg>
<div class="a" style="left:869px;top:107px;width:11px;height:28px;background:#D3DAE8;"></div>
<svg style="left:871px;top:113px;" width="6" height="5" viewBox="0 0 6 5"><path d="M0 0L2 2L0 4ZM3 0L5 2L3 4Z" fill="#424242"/></svg>
<div class="a" style="left:706px;top:135px;width:174px;height:22px;background:#CFD6E5;"></div>
<div class="a" style="left:707px;top:136px;width:173px;height:19px;background:#FFFFFF;"></div>
<div class="t" style="left:710.20px;top:140px;font-size:12px;line-height:1;color:#6D6D6D;;letter-spacing:-0.208px">Search Solution Explorer (</div>
<svg style="left:852px;top:141px;" width="14" height="13" viewBox="0 0 14 13"><circle cx="9" cy="4.8" r="3.7" fill="none" stroke="#424242" stroke-width="1.7"/><path d="M6.3 7.5 L1.5 12.3" stroke="#424242" stroke-width="2.2"/></svg>
<svg style="left:871px;top:146px;" width="6" height="4" viewBox="0 0 6 4"><path d="M0 0h6l-3 3z" fill="#424242"/></svg>
<div class="a" style="left:706px;top:157px;width:157px;height:379px;overflow:hidden;background:#fff">
<svg style="left:29px;top:9px;" width="6" height="9" viewBox="0 0 6 9"><path d="M0.6 0.6L5 4.5L0.6 8.4Z" fill="none" stroke="#1E1E1E" stroke-width="1.1"/></svg>
<svg style="left:49px;top:6px;" width="14" height="14" viewBox="0 0 14 14"><circle cx="7" cy="7" r="6.3" fill="none" stroke="#424242" stroke-width="1.1"/><path d="M0.7 5H13.3M0.7 9H13.3M5 0.7V13.3M9 0.7V13.3" stroke="#424242" stroke-width="1"/></svg>
<div class="t" style="left:69.40px;top:7px;font-size:12px;line-height:1;color:#1E1E1E;;letter-spacing:0.100px">wwwroot</div>
<svg style="left:29px;top:29px;" width="6" height="6" viewBox="0 0 6 6"><path d="M6 0V6H0Z" fill="#1E1E1E"/></svg>
<svg style="left:49px;top:25px;" width="15" height="12" viewBox="0 0 15 12"><path d="M1.5 11V1.5H6L7 2.5H13.5V11Z" fill="#F3F3F3" stroke="#DCB67A"/><path d="M0 11.5L2.5 5.5H15L13.5 11.5Z" fill="#DCB67A"/></svg>
<div class="t" style="left:69.40px;top:25px;font-size:12px;line-height:1;color:#1E1E1E;;letter-spacing:0.050px">ClientApp</div>
<svg style="left:47px;top:45px;" width="6" height="9" viewBox="0 0 6 9"><path d="M0.6 0.6L5 4.5L0.6 8.4Z" fill="none" stroke="#1E1E1E" stroke-width="1.1"/></svg>
<svg style="left:67px;top:43px;" width="15" height="12" viewBox="0 0 15 12"><path d="M0 1.5H5.5L6.5 0.5H14.5V11.5H0Z" fill="#DCB67A"/><path d="M6 2.5H14.5" stroke="#F2E3C6" stroke-width="1"/></svg>
<div class="t" style="left:87.40px;top:43px;font-size:12px;line-height:1;color:#1E1E1E;;letter-spacing:-0.800px">e2e</div>
<svg style="left:47px;top:63px;" width="6" height="9" viewBox="0 0 6 9"><path d="M0.6 0.6L5 4.5L0.6 8.4Z" fill="none" stroke="#1E1E1E" stroke-width="1.1"/></svg>
<svg style="left:67px;top:61px;" width="15" height="12" viewBox="0 0 15 12"><path d="M0 1.5H5.5L6.5 0.5H14.5V11.5H0Z" fill="#DCB67A"/><path d="M6 2.5H14.5" stroke="#F2E3C6" stroke-width="1"/></svg>
<div class="t" style="left:87.40px;top:61px;font-size:12px;line-height:1;color:#1E1E1E;;letter-spacing:-0.400px">src</div>
<svg style="left:66px;top:77px;" width="16" height="16" viewBox="0 0 16 16"><rect x="5" y="3" width="6.5" height="9.8" fill="#F2F2F2"/><path d="M4.3 8V3.2Q4.3 1.9 5.6 1.9H14.8V3.3" fill="none" stroke="#424242" stroke-width="1.6"/><path d="M11.7 2.5V12.3Q11.7 13.2 10.8 13.2H8" fill="none" stroke="#424242" stroke-width="1.5"/><circle cx="3.8" cy="11.7" r="2.1" fill="#E6E6E6" stroke="#424242" stroke-width="1.3"/></svg>
<div class="t" style="left:87.39999999999998px;top:79px;font-size:12px;line-height:1;color:#1E1E1E;letter-spacing:0.1px">.angular-cli.json</div>
<svg style="left:68px;top:95px;" width="12" height="14" viewBox="0 0 12 14"><path d="M1.5 0.5H7.5L10.5 3.5V13.5H1.5Z" fill="#fff" stroke="#424242"/></svg>
<div class="t" style="left:86.40px;top:97px;font-size:12px;line-height:1;color:#1E1E1E;;letter-spacing:0.283px">.editorconfig</div>
<svg style="left:68px;top:113px;" width="12" height="15" viewBox="0 0 12 15"><path d="M0.5 0.5H8.5L11.5 3.5V14.5H0.5Z" fill="#F0F2F8" stroke="#8A95A8"/><path d="M2 4.5H10M2 6.5H10M2 8.5H10M2 10.5H10M2 12.5H10" stroke="#9FB2CC" stroke-width="0.8"/></svg>
<div class="t" style="left:86.40px;top:115px;font-size:12px;line-height:1;color:#1E1E1E;;letter-spacing:0.333px">.gitignore</div>
<svg style="left:66px;top:131px;" width="16" height="16" viewBox="0 0 16 16"><rect x="5" y="3" width="6.5" height="9.8" fill="#F2F2F2"/><path d="M4.3 8V3.2Q4.3 1.9 5.6 1.9H14.8V3.3" fill="none" stroke="#E8642C" stroke-width="1.6"/><path d="M11.7 2.5V12.3Q11.7 13.2 10.8 13.2H8" fill="none" stroke="#E8642C" stroke-width="1.5"/><circle cx="3.8" cy="11.7" r="2.1" fill="#E6E6E6" stroke="#E8642C" stroke-width="1.3"/></svg>
<div class="t" style="left:87.39999999999998px;top:133px;font-size:12px;line-height:1;color:#1E1E1E;letter-spacing:0.1px">karma.conf.js</div>
<svg style="left:66px;top:149px;" width="16" height="16" viewBox="0 0 16 16"><rect x="5" y="3" width="6.5" height="9.8" fill="#F2F2F2"/><path d="M4.3 8V3.2Q4.3 1.9 5.6 1.9H14.8V3.3" fill="none" stroke="#424242" stroke-width="1.6"/><path d="M11.7 2.5V12.3Q11.7 13.2 10.8 13.2H8" fill="none" stroke="#424242" stroke-width="1.5"/><circle cx="3.8" cy="11.7" r="2.1" fill="#E6E6E6" stroke="#424242" stroke-width="1.3"/></svg>
<div class="t" style="left:86.40px;top:151px;font-size:12px;line-height:1;color:#1E1E1E;;letter-spacing:-0.091px">package.json</div>
<svg style="left:66px;top:167px;" width="16" height="16" viewBox="0 0 16 16"><rect x="5" y="3" width="6.5" height="9.8" fill="#F2F2F2"/><path d="M4.3 8V3.2Q4.3 1.9 5.6 1.9H14.8V3.3" fill="none" stroke="#424242" stroke-width="1.6"/><path d="M11.7 2.5V12.3Q11.7 13.2 10.8 13.2H8" fill="none" stroke="#424242" stroke-width="1.5"/><circle cx="3.8" cy="11.7" r="2.1" fill="#E6E6E6" stroke="#424242" stroke-width="1.3"/></svg>
<div class="t" style="left:87.39999999999998px;top:169px;font-size:12px;line-height:1;color:#1E1E1E;letter-spacing:0.1px">package-lock.json</div>
<svg style="left:66px;top:185px;" width="16" height="16" viewBox="0 0 16 16"><rect x="5" y="3" width="6.5" height="9.8" fill="#F2F2F2"/><path d="M4.3 8V3.2Q4.3 1.9 5.6 1.9H14.8V3.3" fill="none" stroke="#E8642C" stroke-width="1.6"/><path d="M11.7 2.5V12.3Q11.7 13.2 10.8 13.2H8" fill="none" stroke="#E8642C" stroke-width="1.5"/><circle cx="3.8" cy="11.7" r="2.1" fill="#E6E6E6" stroke="#E8642C" stroke-width="1.3"/></svg>
<div class="t" style="left:87.39999999999998px;top:187px;font-size:12px;line-height:1;color:#1E1E1E;letter-spacing:0.1px">protractor.conf.js</div>
<svg style="left:68px;top:203px;" width="12" height="14" viewBox="0 0 12 14"><path d="M1.5 0.5H7.5L10.5 3.5V13.5H1.5Z" fill="#fff" stroke="#424242"/><path d="M3 5.5H8.5M3 7.5H8.5M3 9.5H8.5M3 11.5H8.5" stroke="#424242" stroke-width="0.9"/></svg>
<div class="t" style="left:86.40px;top:205px;font-size:12px;line-height:1;color:#1E1E1E;;letter-spacing:-0.400px">README.md</div>
<svg style="left:66px;top:221px;" width="16" height="16" viewBox="0 0 16 16"><rect x="5" y="3" width="6.5" height="9.8" fill="#F2F2F2"/><path d="M4.3 8V3.2Q4.3 1.9 5.6 1.9H14.8V3.3" fill="none" stroke="#424242" stroke-width="1.6"/><path d="M11.7 2.5V12.3Q11.7 13.2 10.8 13.2H8" fill="none" stroke="#424242" stroke-width="1.5"/><circle cx="3.8" cy="11.7" r="2.1" fill="#E6E6E6" stroke="#424242" stroke-width="1.3"/></svg>
<div class="t" style="left:87.40px;top:223px;font-size:12px;line-height:1;color:#1E1E1E;;letter-spacing:0.117px">tsconfig.json</div>
<svg style="left:66px;top:239px;" width="16" height="16" viewBox="0 0 16 16"><rect x="5" y="3" width="6.5" height="9.8" fill="#F2F2F2"/><path d="M4.3 8V3.2Q4.3 1.9 5.6 1.9H14.8V3.3" fill="none" stroke="#424242" stroke-width="1.6"/><path d="M11.7 2.5V12.3Q11.7 13.2 10.8 13.2H8" fill="none" stroke="#424242" stroke-width="1.5"/><circle cx="3.8" cy="11.7" r="2.1" fill="#E6E6E6" stroke="#424242" stroke-width="1.3"/></svg>
<div class="t" style="left:87.40px;top:241px;font-size:12px;line-height:1;color:#1E1E1E;;letter-spacing:0.060px">tslint.json</div>
<svg style="left:29px;top:261px;" width="6" height="9" viewBox="0 0 6 9"><path d="M0.6 0.6L5 4.5L0.6 8.4Z" fill="none" stroke="#1E1E1E" stroke-width="1.1"/></svg>
<svg style="left:49px;top:259px;" width="15" height="12" viewBox="0 0 15 12"><path d="M0 1.5H5.5L6.5 0.5H14.5V11.5H0Z" fill="#DCB67A"/><path d="M6 2.5H14.5" stroke="#F2E3C6" stroke-width="1"/></svg>
<div class="t" style="left:69.40px;top:259px;font-size:12px;line-height:1;color:#1E1E1E;;letter-spacing:0.000px">Controllers</div>
<svg style="left:29px;top:279px;" width="6" height="9" viewBox="0 0 6 9"><path d="M0.6 0.6L5 4.5L0.6 8.4Z" fill="none" stroke="#1E1E1E" stroke-width="1.1"/></svg>
<svg style="left:49px;top:277px;" width="15" height="12" viewBox="0 0 15 12"><path d="M0 1.5H5.5L6.5 0.5H14.5V11.5H0Z" fill="#DCB67A"/><path d="M6 2.5H14.5" stroke="#F2E3C6" stroke-width="1"/></svg>
<div class="t" style="left:68.40px;top:277px;font-size:12px;line-height:1;color:#1E1E1E;;letter-spacing:-0.700px">Pages</div>
<svg style="left:50px;top:293px;" width="12" height="15" viewBox="0 0 12 15"><path d="M0.5 0.5H8.5L11.5 3.5V14.5H0.5Z" fill="#F0F2F8" stroke="#8A95A8"/><path d="M2 4.5H10M2 6.5H10M2 8.5H10M2 10.5H10M2 12.5H10" stroke="#9FB2CC" stroke-width="0.8"/></svg>
<div class="t" style="left:68.40px;top:295px;font-size:12px;line-height:1;color:#1E1E1E;;letter-spacing:0.333px">.gitignore</div>
<svg style="left:29px;top:315px;" width="6" height="9" viewBox="0 0 6 9"><path d="M0.6 0.6L5 4.5L0.6 8.4Z" fill="none" stroke="#1E1E1E" stroke-width="1.1"/></svg>
<svg style="left:48px;top:311px;" width="16" height="16" viewBox="0 0 16 16"><rect x="5" y="3" width="6.5" height="9.8" fill="#F2F2F2"/><path d="M4.3 8V3.2Q4.3 1.9 5.6 1.9H14.8V3.3" fill="none" stroke="#424242" stroke-width="1.6"/><path d="M11.7 2.5V12.3Q11.7 13.2 10.8 13.2H8" fill="none" stroke="#424242" stroke-width="1.5"/><circle cx="3.8" cy="11.7" r="2.1" fill="#E6E6E6" stroke="#424242" stroke-width="1.3"/></svg>
<div class="t" style="left:69.40px;top:313px;font-size:12px;line-height:1;color:#1E1E1E;;letter-spacing:-0.027px">appsettings.json</div>
<svg style="left:29px;top:333px;" width="6" height="9" viewBox="0 0 6 9"><path d="M0.6 0.6L5 4.5L0.6 8.4Z" fill="none" stroke="#1E1E1E" stroke-width="1.1"/></svg>
<svg style="left:50px;top:332px;" width="13" height="9" viewBox="0 0 13 9"><path d="M6.2 2.2C5.6 1.5 4.9 1.2 4 1.2C2.3 1.2 1.1 2.6 1.1 4.5C1.1 6.4 2.3 7.8 4 7.8C4.9 7.8 5.6 7.5 6.2 6.8" fill="none" stroke="#2E8B2E" stroke-width="1.9"/><path d="M8.7 0.8V6.2M10.9 0.8V6.2M7.3 2.5H12.3M7.3 4.6H12.3" stroke="#2E8B2E" stroke-width="1.2"/></svg>
<div class="t" style="left:68.40px;top:331px;font-size:12px;line-height:1;color:#1E1E1E;;letter-spacing:-0.044px">Program.cs</div>
<svg style="left:29px;top:351px;" width="6" height="9" viewBox="0 0 6 9"><path d="M0.6 0.6L5 4.5L0.6 8.4Z" fill="none" stroke="#1E1E1E" stroke-width="1.1"/></svg>
<svg style="left:50px;top:350px;" width="13" height="9" viewBox="0 0 13 9"><path d="M6.2 2.2C5.6 1.5 4.9 1.2 4 1.2C2.3 1.2 1.1 2.6 1.1 4.5C1.1 6.4 2.3 7.8 4 7.8C4.9 7.8 5.6 7.5 6.2 6.8" fill="none" stroke="#2E8B2E" stroke-width="1.9"/><path d="M8.7 0.8V6.2M10.9 0.8V6.2M7.3 2.5H12.3M7.3 4.6H12.3" stroke="#2E8B2E" stroke-width="1.2"/></svg>
<div class="t" style="left:68.40px;top:349px;font-size:12px;line-height:1;color:#1E1E1E;;letter-spacing:-0.133px">Startup.cs</div>
</div>
<div class="a" style="left:863px;top:157px;width:17px;height:379px;background:#E8E8EC;"></div>
<svg style="left:867px;top:166px;" width="9" height="5" viewBox="0 0 9 5"><path d="M0 5L4.5 0L9 5Z" fill="#A3A8B3"/></svg>
<div class="a" style="left:867px;top:244px;width:9px;height:275px;background:#C2C3C9;"></div>
<svg style="left:867px;top:525px;" width="9" height="5" viewBox="0 0 9 5"><path d="M0 0L4.5 5L9 0Z" fill="#A3A8B3"/></svg>
<div class="a" style="left:706px;top:536px;width:174px;height:17px;background:#E8E8EC;"></div>
<svg style="left:712px;top:541px;" width="5" height="8" viewBox="0 0 5 8"><path d="M5 0L0 4L5 8Z" fill="#A3A8B3"/></svg>
<div class="a" style="left:723px;top:540px;width:82px;height:9px;background:#C2C3C9;"></div>
<svg style="left:851px;top:541px;" width="5" height="8" viewBox="0 0 5 8"><path d="M0 0L5 4L0 8Z" fill="#A3A8B3"/></svg>
<div class="a" style="left:706px;top:553px;width:88px;height:20px;background:#FFFFFF;"></div>
<div class="t" style="left:710.50px;top:557px;font-size:12px;line-height:1;color:#1E1E1E;;letter-spacing:-0.133px">Solution Expl...</div>
<div class="a" style="left:794px;top:553px;width:86px;height:20px;background:#4D6082;"></div>
<div class="t" style="left:801.50px;top:558px;font-size:12px;line-height:1;color:#FFFFFF;;letter-spacing:-0.333px">Team Explorer</div>
<svg style="left:4px;top:588px;" width="17" height="10" viewBox="0 0 17 10"><path d="M4.5 0.7H16L12.5 9.3H1Z" fill="none" stroke="#fff" stroke-width="1.3"/></svg>
<div class="t" style="left:27.40px;top:586px;font-size:12px;line-height:1;color:#FFFFFF;;letter-spacing:-0.700px">Ready</div>
<div class="t" style="left:133.50px;top:586px;font-size:12px;line-height:1;color:#FFFFFF;;letter-spacing:-0.250px">Ln 59</div>
<div class="t" style="left:226.00px;top:586px;font-size:12px;line-height:1;color:#FFFFFF;;letter-spacing:-0.400px">Col 14</div>
<div class="t" style="left:318.00px;top:586px;font-size:12px;line-height:1;color:#FFFFFF;;letter-spacing:-0.500px">Ch 14</div>
<div class="t" style="left:453.00px;top:586px;font-size:12px;line-height:1;color:#FFFFFF;;letter-spacing:-0.500px">INS</div>
<svg style="left:728px;top:587px;" width="10" height="12" viewBox="0 0 10 12"><path d="M5 1V12M1 5L5 1L9 5" fill="none" stroke="#D0E6F5" stroke-width="1.8"/></svg>
<div class="t" style="left:747.70px;top:586px;font-size:12px;line-height:1;color:#FFFFFF;;letter-spacing:-0.050px">Add to Source Control</div>
<svg style="left:871px;top:589px;" width="8" height="5" viewBox="0 0 8 5"><path d="M0 4.5L4 0L8 4.5Z" fill="#fff"/></svg>
<div class="a" style="left:906px;top:591px;width:1px;height:1px;background:#9CC8EA;"></div>
<div class="a" style="left:904px;top:593px;width:1px;height:1px;background:#9CC8EA;"></div>
<div class="a" style="left:906px;top:593px;width:1px;height:1px;background:#9CC8EA;"></div>
<div class="a" style="left:902px;top:595px;width:1px;height:1px;background:#9CC8EA;"></div>
<div class="a" style="left:904px;top:595px;width:1px;height:1px;background:#9CC8EA;"></div>
<div class="a" style="left:906px;top:595px;width:1px;height:1px;background:#9CC8EA;"></div>
<div class="a" style="left:900px;top:597px;width:1px;height:1px;background:#9CC8EA;"></div>
<div class="a" style="left:902px;top:597px;width:1px;height:1px;background:#9CC8EA;"></div>
<div class="a" style="left:904px;top:597px;width:1px;height:1px;background:#9CC8EA;"></div>
<div class="a" style="left:906px;top:597px;width:1px;height:1px;background:#9CC8EA;"></div>
<div class="a" style="left:681px;top:144px;width:17px;height:412px;background:#E8E8EC;"></div>
<div class="a" style="left:681px;top:128px;width:17px;height:16px;background:#EEF3FB;border:1px solid #C9D3E3"></div>
<svg style="left:684px;top:131px;" width="11" height="11" viewBox="0 0 11 11"><path d="M0 4.5H11M0 6.5H11M5.5 0V3.5M5.5 7.5V11M3.5 2L5.5 0L7.5 2M3.5 9L5.5 11L7.5 9" fill="none" stroke="#1E1E1E" stroke-width="1.1"/></svg>
<svg style="left:685px;top:151px;" width="9" height="5" viewBox="0 0 9 5"><path d="M0 5L4.5 0L9 5Z" fill="#A3A8B3"/></svg>
<div class="a" style="left:685px;top:307px;width:9px;height:104px;background:#C2C3C9;"></div>
<div class="a" style="left:682px;top:343px;width:3px;height:8px;background:#6BDB6B;"></div>
<div class="a" style="left:681px;top:394px;width:17px;height:2px;background:#0000C0;"></div>
<svg style="left:685px;top:544px;" width="9" height="5" viewBox="0 0 9 5"><path d="M0 0L4.5 5L9 0Z" fill="#A3A8B3"/></svg>
<div class="a" style="left:31px;top:127px;width:1px;height:429px;background:#BCC5D6;"></div>
<svg style="left:102px;top:481px;" width="17" height="15" viewBox="0 0 17 15"><path d="M10 6 L16 0.5" stroke="#505050" stroke-width="1.6"/><path d="M8.5 5.5 L11.5 8.5 L10 9 L8 7Z" fill="#505050"/><path d="M1.5 13.8 C0 12.5 0.5 11 2 10 L7.5 5.5 L10.5 8.5 L6 13 C4.5 14.5 3 15 1.5 13.8Z" fill="#1F6FB8"/><path d="M4 9l1 1M6 7.5l1 1M5.5 10.5l1 1M7.5 9l1 1" stroke="#9CC3EA" stroke-width="0.8"/></svg>
<svg style="left:36px;top:134px;" width="9" height="5" viewBox="0 0 9 5"><path d="M0 5L4.5 0L9 5Z" fill="#C8CAD0"/></svg>
<svg style="left:36px;top:545px;" width="9" height="5" viewBox="0 0 9 5"><path d="M0 0L4.5 5L9 0Z" fill="#C8CAD0"/></svg>
<div class="a" style="left:31px;top:556px;width:667px;height:17px;background:#E8E8EC;"></div>
<div class="a" style="left:32px;top:557px;width:60px;height:15px;background:#FCFCFC;border:1px solid #D5D8E0"></div>
<div class="t" style="left:33.70px;top:559px;font-size:12px;line-height:1;color:#1E1E1E;;letter-spacing:-0.400px">100 %</div>
<svg style="left:84px;top:565px;" width="6" height="4" viewBox="0 0 6 4"><path d="M0 0h6l-3 3z" fill="#1E1E1E"/></svg>
<svg style="left:98px;top:560px;" width="5" height="9" viewBox="0 0 5 9"><path d="M5 0L0 4.5L5 9Z" fill="#868999"/></svg>
<div class="a" style="left:109px;top:560px;width:362px;height:9px;background:#C2C3C9;"></div>
<svg style="left:670px;top:560px;" width="5" height="9" viewBox="0 0 5 9"><path d="M0 0L5 4.5L0 9Z" fill="#868999"/></svg>
</body></html>
